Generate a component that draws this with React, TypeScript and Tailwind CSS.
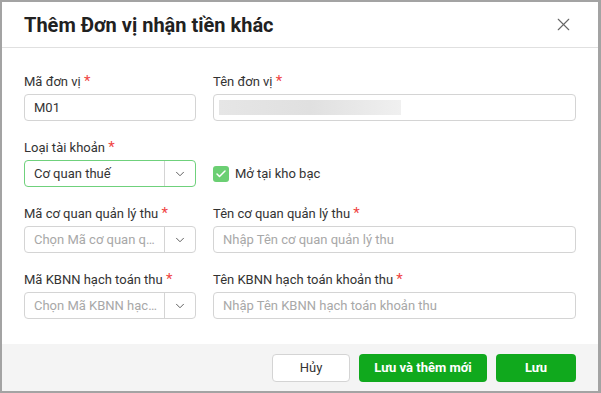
import { X, ChevronDown, Check } from 'lucide-react';

function Label({ text }: { text: string }) {
  return (
    <div className="h-[18px] leading-[18px] text-[13px] text-[#333] mb-[4px] whitespace-nowrap">
      {text} <span className="text-[#f04444] text-[15px]">*</span>
    </div>
  );
}

function TextInput({ value, placeholder, children }: { value?: string; placeholder?: string; children?: React.ReactNode }) {
  return (
    <div className="h-[27px] rounded-[4px] border border-[#d4d4d4] bg-white flex items-center px-[9px] text-[13px]">
      {children ? children : value ? (
        <span className="text-[#333]">{value}</span>
      ) : (
        <span className="text-[#a8a8a8] whitespace-nowrap overflow-hidden">{placeholder}</span>
      )}
    </div>
  );
}

function SelectInput({ value, placeholder, active }: { value?: string; placeholder?: string; active?: boolean }) {
  return (
    <div
      className={`h-[27px] rounded-[4px] border bg-white flex items-stretch text-[13px] ${
        active ? 'border-[#6fd17c]' : 'border-[#d4d4d4]'
      }`}
    >
      <div className="flex-1 min-w-0 flex items-center pl-[9px] pr-[4px]">
        {value ? (
          <span className="text-[#333]">{value}</span>
        ) : (
          <span className="text-[#a8a8a8] whitespace-nowrap overflow-hidden text-ellipsis">{placeholder}</span>
        )}
      </div>
      <div className="w-[31px] border-l border-[#d4d4d4] flex items-center justify-center">
        <ChevronDown className="w-[14px] h-[14px] text-[#555]" strokeWidth={1.6} />
      </div>
    </div>
  );
}

export default function App() {
  return (
    <div
      className="w-[601px] h-[393px] bg-[#a3a3a3] pt-[2px] pl-[2px] pr-[3px] pb-[2px]"
      style={{ fontFamily: 'Roboto, "Noto Sans", sans-serif' }}
    >
      <div className="w-full h-full bg-white flex flex-col">
        {/* Header */}
        <div className="h-[46px] border-b border-[#e0e0e0] flex items-center justify-between pl-[22px] pr-[24px] shrink-0">
          <h3 className="text-[20px] font-bold text-[#212121] leading-none">Thêm Đơn vị nhận tiền khác</h3>
          <X className="w-[21px] h-[21px] text-[#666]" strokeWidth={1.3} />
        </div>

        {/* Body */}
        <div className="flex-1 pt-[24px] px-[22px] flex flex-col gap-[17px]">
          <div className="flex gap-[17px]">
            <div className="w-[172px]">
              <Label text="Mã đơn vị" />
              <TextInput value="M01" />
            </div>
            <div className="flex-1">
              <Label text="Tên đơn vị" />
              <TextInput>
                <div className="-ml-[4px] h-[15px] w-[182px] bg-gradient-to-r from-[#e6e6e6] via-[#e0e0e0] to-[#f0f0f0]" />
              </TextInput>
            </div>
          </div>

          <div className="flex gap-[17px]">
            <div className="w-[172px]">
              <Label text="Loại tài khoản" />
              <SelectInput value="Cơ quan thuế" active />
            </div>
            <div className="flex-1 pt-[22px]">
              <div className="h-[27px] flex items-center gap-[6px]">
                <div className="w-[16px] h-[16px] rounded-[3px] bg-[#6bcf73] flex items-center justify-center">
                  <Check className="w-[12px] h-[12px] text-white" strokeWidth={3} />
                </div>
                <span className="text-[13px] text-[#333]">Mở tại kho bạc</span>
              </div>
            </div>
          </div>

          <div className="flex gap-[17px]">
            <div className="w-[172px]">
              <Label text="Mã cơ quan quản lý thu" />
              <SelectInput placeholder="Chọn Mã cơ quan quản lý thu" />
            </div>
            <div className="flex-1">
              <Label text="Tên cơ quan quản lý thu" />
              <TextInput placeholder="Nhập Tên cơ quan quản lý thu" />
            </div>
          </div>

          <div className="flex gap-[17px]">
            <div className="w-[172px]">
              <Label text="Mã KBNN hạch toán thu" />
              <SelectInput placeholder="Chọn Mã KBNN hạch toán thu" />
            </div>
            <div className="flex-1">
              <Label text="Tên KBNN hạch toán khoản thu" />
              <TextInput placeholder="Nhập Tên KBNN hạch toán khoản thu" />
            </div>
          </div>
        </div>

        {/* Footer */}
        <div className="h-[47px] bg-[#f4f4f4] flex items-start justify-end gap-[9px] pt-[10px] pr-[22px] shrink-0">
          <button className="w-[78px] h-[28px] rounded-[4px] border border-[#d4d4d4] bg-white text-[13px] text-[#333]">
            Hủy
          </button>
          <button className="w-[128px] h-[28px] rounded-[4px] bg-[#10a91d] text-[13px] font-bold text-white">
            Lưu và thêm mới
          </button>
          <button className="w-[80px] h-[28px] rounded-[4px] bg-[#10a91d] text-[13px] font-bold text-white">
            Lưu
          </button>
        </div>
      </div>
    </div>
  );
}
